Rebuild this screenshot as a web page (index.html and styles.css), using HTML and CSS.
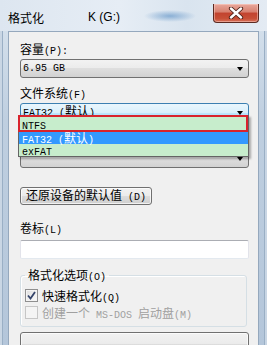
FILE: index.html
```html
<!DOCTYPE html>
<html lang="zh-CN">
<head>
    <meta charset="UTF-8">
    <title>格式化 K (G:)</title>
    <link rel="stylesheet" href="styles.css">
</head>
<body>
    <div class="window">
        <div class="titlebar">
            <span class="title">格式化</span>
            <span class="drive">K (G:)</span>
            <div class="close-btn">
                <svg width="16" height="12" viewBox="0 0 16 12">
                    <path d="M3 1.5 L13 10.5 M13 1.5 L3 10.5" stroke="#4a2018" stroke-width="4.2" stroke-linecap="round"/>
                    <path d="M3 1.5 L13 10.5 M13 1.5 L3 10.5" stroke="#ffffff" stroke-width="2.4" stroke-linecap="round"/>
                </svg>
            </div>
        </div>
        <div class="client">
            <div class="label">容量<span class="en">(P):</span></div>
            <div class="combo">
                <span class="combo-text en">6.95 GB</span>
                <span class="arrow"></span>
            </div>

            <div class="label">文件系统<span class="en">(F)</span></div>
            <div class="combo-wrap">
                <div class="combo active">
                    <span class="combo-text"><span class="en">FAT32 (</span>默认<span class="en">)</span></span>
                    <span class="arrow"></span>
                </div>
                <div class="dropdown">
                    <div class="option marked"><span class="en">NTFS</span></div>
                    <div class="option selected"><span class="en">FAT32 (</span>默认<span class="en">)</span></div>
                    <div class="option"><span class="en">exFAT</span></div>
                </div>
            </div>

            <!-- allocation unit row, covered by the open list -->
            <div class="label label-gap"></div>
            <div class="combo">
                <span class="combo-text"></span>
                <span class="arrow"></span>
            </div>

            <button class="btn restore-btn">还原设备的默认值<span class="en"> (D)</span></button>

            <div class="label volume-label">卷标<span class="en">(L)</span></div>
            <div class="textbox"></div>

            <fieldset class="options">
                <legend>格式化选项<span class="en">(O)</span></legend>
                <div class="check-row">
                    <span class="checkbox checked">
                        <svg width="9" height="9" viewBox="0 0 9 9">
                            <path d="M1 4.5 L3.5 7.5 L8 1" fill="none" stroke="#34446a" stroke-width="1.8"/>
                        </svg>
                    </span>
                    <span>快速格式化<span class="en">(Q)</span></span>
                </div>
                <div class="check-row disabled">
                    <span class="checkbox"></span>
                    <span>创建一个<span class="en"> MS-DOS </span>启动盘<span class="en">(M)</span></span>
                </div>
            </fieldset>

            <button class="btn start-btn"></button>
        </div>
    </div>
</body>
</html>
```

FILE: styles.css
```css
body {
    margin: 0;
    width: 267px;
    height: 345px;
    overflow: hidden;
    font-family: "Noto Sans CJK SC", sans-serif;
    font-size: 12px;
    color: #000;
}
.en {
    font-family: "Liberation Mono", monospace;
    font-size: 10px;
}
.window {
    height: 345px;
    box-sizing: border-box;
    padding: 0 8px;
    background: linear-gradient(to bottom, #dfe7f0 0, #d3dfeb 31px, #bfcfe0 120px, #b4c6da 100%);
    box-shadow: inset 2px 0 0 #c9d6e4, inset 3px 0 0 #9aafc5, inset -2px 0 0 #c9d6e4, inset -3px 0 0 #9aafc5;
}
.titlebar {
    height: 31px;
    box-sizing: border-box;
    padding-top: 3px;
    display: flex;
    align-items: center;
    position: relative;
    background:
        radial-gradient(ellipse 26px 6px at 170px 16px, rgba(70, 130, 190, 0.55), rgba(70, 130, 190, 0)),
        linear-gradient(to right, #dde6f0, #e6edf5 45%, #d9e4ef 70%, #e4ebf3);
    margin: 0 -8px;
    padding-left: 8px;
}
.title {
    font-size: 12px;
}
.drive {
    margin-left: 44px;
    font-family: "Liberation Sans", sans-serif;
    font-size: 12px;
}
.close-btn {
    position: absolute;
    right: 8px;
    top: 4px;
    width: 46px;
    height: 19px;
    box-sizing: border-box;
    border: 1px solid #5b2a22;
    border-top: none;
    border-radius: 0 0 4px 4px;
    background: linear-gradient(to bottom, #e9a89c 0%, #d7806f 45%, #c2432f 50%, #c74f36 80%, #d7705a 100%);
    box-shadow: inset 0 0 0 1px rgba(255, 220, 210, 0.45);
    display: flex;
    align-items: center;
    justify-content: center;
}
.client {
    height: 330px;
    background: #f0f0f0;
    border: 1px solid #95a8bd;
    border-bottom: none;
    padding: 0 9px 0 11px;
    display: flex;
    flex-direction: column;
    align-items: flex-start;
}
.label {
    height: 14px;
    line-height: 14px;
    margin-top: 8px;
    white-space: nowrap;
}
.label:first-child {
    margin-top: 10px;
}
.label-gap {
    margin-top: 10px;
}
.combo-wrap {
    position: relative;
    align-self: stretch;
}
.combo {
    align-self: stretch;
    height: 19px;
    margin-top: 3px;
    box-sizing: border-box;
    border: 1px solid #707070;
    border-radius: 3px;
    background: linear-gradient(to bottom, #f2f2f2 0%, #ebebeb 50%, #dedede 50%, #d2d2d2 100%);
    display: flex;
    align-items: center;
    padding: 0 5px 0 2px;
}
.combo.active {
    border-color: #3c7fb1;
    background: linear-gradient(to bottom, #eaf6fd 0%, #d9f0fc 50%, #bee6fd 50%, #a7d9f5 100%);
}
.combo-text {
    flex: 1;
    white-space: nowrap;
    line-height: 14px;
}
.arrow {
    width: 0;
    height: 0;
    border-left: 3.5px solid transparent;
    border-right: 3.5px solid transparent;
    border-top: 4px solid #000;
    margin-top: 1px;
}
.dropdown {
    position: absolute;
    top: 15px;
    left: -2px;
    right: 0;
    background: #c7edcc;
    border: 1px solid #646464;
    box-shadow: 2px 2px 2px rgba(0, 0, 0, 0.3);
    z-index: 2;
}
.option {
    height: 12px;
    line-height: 12px;
    padding-left: 3px;
    white-space: nowrap;
}
.option.marked {
    height: 17px;
    line-height: 13px;
    box-sizing: border-box;
    border: 2px solid #d9232d;
    margin: -1px 0 0 -1px;
    padding-left: 2px;
}
.option.selected {
    background: #3399ff;
    color: #fff;
}
.btn {
    font-family: "Noto Sans CJK SC", sans-serif;
    font-size: 12px;
    color: #000;
    border: 1px solid #707070;
    border-radius: 3px;
    background: linear-gradient(to bottom, #f2f2f2 0%, #ebebeb 50%, #dddddd 50%, #cfcfcf 100%);
    box-shadow: inset 0 0 0 1px rgba(255, 255, 255, 0.7);
    padding: 0;
    margin: 0;
}
.restore-btn {
    margin-top: 19px;
    width: 132px;
    height: 18px;
    line-height: 14px;
    white-space: nowrap;
}
.volume-label {
    margin-top: 16px;
}
.textbox {
    align-self: stretch;
    height: 19px;
    margin-top: 5px;
    box-sizing: border-box;
    background: #fff;
    border: 1px solid #e2e3ea;
    border-top-color: #abadb3;
    border-bottom-color: #e3e9ef;
    border-radius: 2px;
}
.options {
    align-self: stretch;
    margin: 9px 2px 0 0;
    padding: 5px 4px 5px 4px;
    border: 1px solid #d5dfe5;
    border-radius: 3px;
    box-shadow: inset 1px 1px 0 #fff;
}
.options legend {
    padding: 0 3px;
    height: 14px;
    line-height: 14px;
    white-space: nowrap;
}
.check-row {
    height: 17px;
    display: flex;
    align-items: center;
    white-space: nowrap;
}
.check-row.disabled {
    color: #a0a0a0;
}
.checkbox {
    width: 13px;
    height: 13px;
    box-sizing: border-box;
    border: 1px solid #8f8f8f;
    background: linear-gradient(135deg, #dedede, #fbfbfb);
    box-shadow: inset 0 0 0 1px #f4f4f4;
    margin-right: 4px;
    display: flex;
    align-items: center;
    justify-content: center;
}
.check-row.disabled .checkbox {
    border-color: #c6c6c6;
    background: #f4f4f4;
}
.start-btn {
    align-self: stretch;
    height: 24px;
    margin-top: 5px;
}
```
